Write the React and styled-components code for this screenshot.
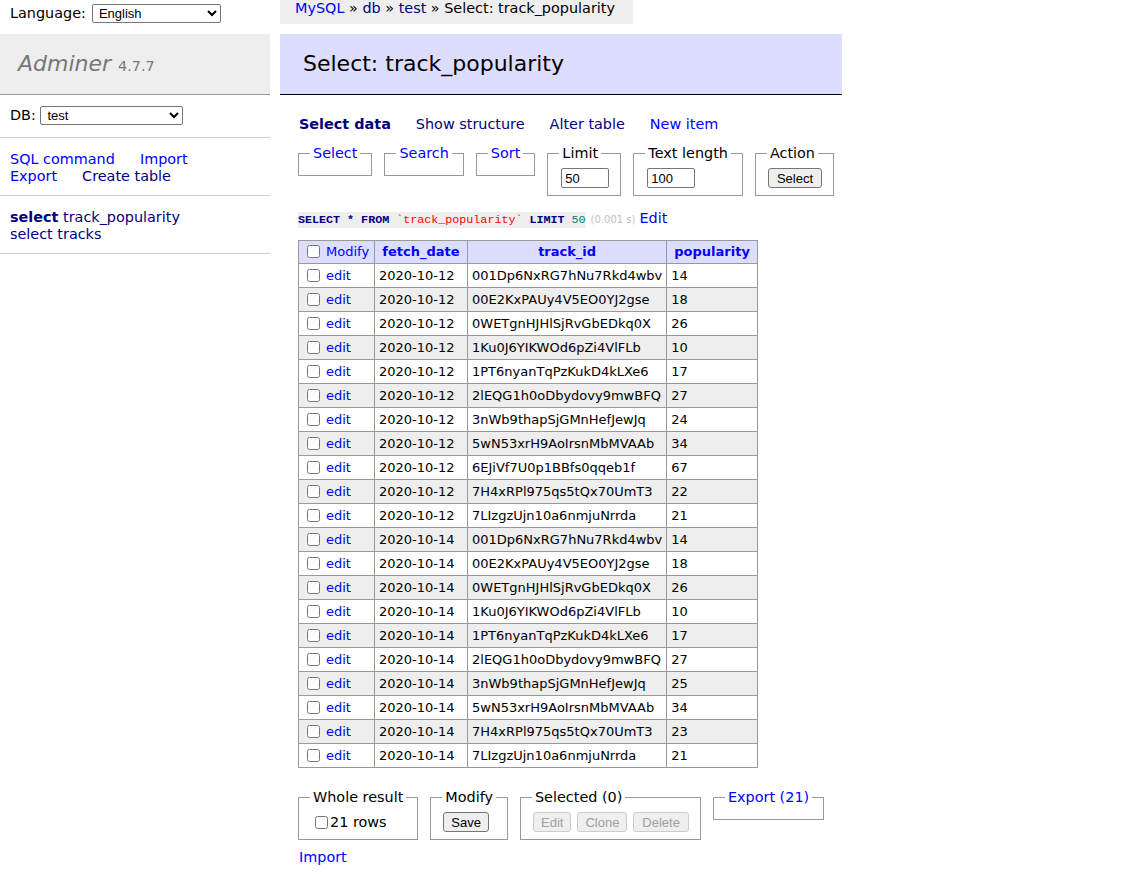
import React from 'react';
import styled, { createGlobalStyle } from 'styled-components';

const GlobalStyle = createGlobalStyle`
  body {
    margin: 0;
    background: #fff;
    color: #000;
    font: 14.4px/1.25 "DejaVu Sans", Verdana, sans-serif;
  }
  a { color: blue; text-decoration: none; }
`;

const rows = [
  ['2020-10-12', '001Dp6NxRG7hNu7Rkd4wbv', 14],
  ['2020-10-12', '00E2KxPAUy4V5EO0YJ2gse', 18],
  ['2020-10-12', '0WETgnHJHlSjRvGbEDkq0X', 26],
  ['2020-10-12', '1Ku0J6YIKWOd6pZi4VlFLb', 10],
  ['2020-10-12', '1PT6nyanTqPzKukD4kLXe6', 17],
  ['2020-10-12', '2lEQG1h0oDbydovy9mwBFQ', 27],
  ['2020-10-12', '3nWb9thapSjGMnHefJewJq', 24],
  ['2020-10-12', '5wN53xrH9AoIrsnMbMVAAb', 34],
  ['2020-10-12', '6EJiVf7U0p1BBfs0qqeb1f', 67],
  ['2020-10-12', '7H4xRPl975qs5tQx70UmT3', 22],
  ['2020-10-12', '7LIzgzUjn10a6nmjuNrrda', 21],
  ['2020-10-14', '001Dp6NxRG7hNu7Rkd4wbv', 14],
  ['2020-10-14', '00E2KxPAUy4V5EO0YJ2gse', 18],
  ['2020-10-14', '0WETgnHJHlSjRvGbEDkq0X', 26],
  ['2020-10-14', '1Ku0J6YIKWOd6pZi4VlFLb', 10],
  ['2020-10-14', '1PT6nyanTqPzKukD4kLXe6', 17],
  ['2020-10-14', '2lEQG1h0oDbydovy9mwBFQ', 27],
  ['2020-10-14', '3nWb9thapSjGMnHefJewJq', 25],
  ['2020-10-14', '5wN53xrH9AoIrsnMbMVAAb', 34],
  ['2020-10-14', '7H4xRPl975qs5tQx70UmT3', 23],
  ['2020-10-14', '7LIzgzUjn10a6nmjuNrrda', 21],
];

const Page = styled.div`
  display: flex;
  align-items: flex-start;
`;

const Menu = styled.div`
  width: 270px;
  flex-shrink: 0;
`;

const Lang = styled.div`
  height: 34px;
  padding: 3px 10px 0;
  box-sizing: border-box;
  display: flex;
  align-items: flex-start;
  gap: 6px;
  line-height: 19px;
`;

const Select = styled.select`
  width: ${(p) => p.$w}px;
  height: 19px;
  margin-top: ${(p) => p.$top || 0}px;
  font: 13px "Liberation Sans", Arial, sans-serif;
  border: 1px solid #767676;
  border-radius: 2px;
  background: #fff;
  padding: 0 2px;
`;

const Logo = styled.h1`
  margin: 0;
  height: 60px;
  padding: 0 0 0 18px;
  display: flex;
  align-items: center;
  background: #eee;
  border-bottom: 1px solid #999;
  color: #777;
  font-size: 22px;
  font-weight: normal;
  font-style: italic;
  span {
    font-style: normal;
    font-size: 14.4px;
    margin-left: 7px;
    margin-top: 4px;
  }
`;

const MenuBlock = styled.div`
  padding: ${(p) => p.$pad};
  border-bottom: 1px solid #ccc;
  line-height: 17px;
`;

const MenuLink = styled.a`
  margin-right: ${(p) => p.$mr ?? 25}px;
  white-space: nowrap;
  color: ${(p) => (p.$navy ? 'navy' : 'blue')};
  font-weight: ${(p) => (p.$bold ? 'bold' : 'normal')};
`;

const Main = styled.div`
  margin-left: 10px;
  padding-right: 20px;
`;

const Breadcrumb = styled.p`
  margin: 0;
  width: fit-content;
  height: 24px;
  line-height: 17px;
  padding: 0 18px 0 15px;
  background: #eee;
  white-space: nowrap;
`;

const Crumb = styled.a`
  color: ${(p) => (p.$navy ? 'navy' : 'blue')};
`;

const Title = styled.h2`
  margin: 10px 0 20px;
  width: 562px;
  height: 61px;
  box-sizing: border-box;
  padding: 0 0 0 23px;
  display: flex;
  align-items: center;
  background: #ddf;
  border-bottom: 1px solid #000;
  font-size: 22px;
  font-weight: normal;
`;

const Content = styled.div`
  padding-left: 18px;
`;

const Links = styled.p`
  margin: 0;
  display: flex;
  gap: 25px;
  line-height: 18px;
  padding-left: 1px;
`;

const Row = styled.div`
  display: flex;
  align-items: flex-start;
  gap: 12px;
  margin-top: ${(p) => p.$top}px;
`;

const Fieldset = styled.fieldset`
  margin: 0;
  padding: 6px 11px 7px;
  border: 1px solid #999;
  min-width: 0;
  display: flex;
  align-items: center;
  gap: ${(p) => p.$gap || 0}px;
  legend {
    padding: 0 3px;
    line-height: 18px;
    margin-left: 0;
  }
`;

const Label = styled.label`
  display: flex;
  align-items: center;
  gap: 2px;
  height: 20px;
  input { margin: 0 0 0 5px; }
`;

const TextInput = styled.input`
  width: 48px;
  height: 20px;
  box-sizing: border-box;
  font: 13px "Liberation Sans", Arial, sans-serif;
  border: 1px solid #767676;
  border-radius: 2px;
  padding: 1px 3px;
  margin: 0 0 0 2px;
`;

const Button = styled.button`
  height: 20px;
  padding: 0 ${(p) => p.$px || 7}px;
  margin: 0 0 0 ${(p) => p.$ml || 0}px;
  font: 13px "Liberation Sans", Arial, sans-serif;
  background: #efefef;
  color: ${(p) => (p.disabled ? '#a0a0a0' : '#000')};
  border: 1px solid ${(p) => (p.disabled ? '#ccc' : '#767676')};
  border-radius: 3px;
`;

const SqlLine = styled.p`
  margin: 13px 0 0;
  display: flex;
  align-items: baseline;
  line-height: 18px;
`;

const Code = styled.code`
  background: #eee;
  font: bold 11.7px "Liberation Mono", "Courier New", monospace;
  color: navy;
  padding: 1px 0;
`;

const Str = styled.span`
  color: ${(p) => p.$color};
  font-weight: normal;
`;

const Time = styled.span`
  color: silver;
  font-size: 10px;
  margin: 0 4px 0 5px;
`;

const Table = styled.table`
  margin-top: 11px;
  border-collapse: collapse;
  border-top: 1px solid #999;
  border-left: 1px solid #999;
  font-size: 13px;
  line-height: 16px;
`;

const Cell = styled.td`
  box-sizing: border-box;
  border-right: 1px solid #999;
  border-bottom: 1px solid #999;
  padding: 0 4px;
  height: ${(p) => p.$h || 24}px;
  width: ${(p) => (p.$w ? `${p.$w}px` : 'auto')};
  background: ${(p) => (p.$head ? '#ddf' : 'transparent')};
  white-space: nowrap;
  input { margin: 0 6px 0 4px; vertical-align: -2px; }
`;

const HeadCell = styled.th`
  box-sizing: border-box;
  border-right: 1px solid #999;
  border-bottom: 1px solid #999;
  padding: 0 7px;
  height: 23px;
  width: ${(p) => p.$w}px;
  background: #ddf;
  text-align: center;
  white-space: nowrap;
`;

const BodyRow = styled.tr`
  background: ${(p) => (p.$odd ? '#eee' : '#fff')};
`;

const Check = styled.input.attrs({ type: 'checkbox' })`
  width: 13px;
  height: 13px;
`;

const Footer = styled.p`
  margin: 8px 0 0;
  line-height: 18px;
  padding-left: 1px;
`;

export default function App() {
  return (
    <Page>
      <GlobalStyle />
      <Menu>
        <Lang>
          <span style={{ marginTop: 1 }}>Language:</span>
          <Select $w={129} $top={1} defaultValue="English">
            <option>English</option>
          </Select>
        </Lang>
        <Logo>
          Adminer
          <span>4.7.7</span>
        </Logo>
        <MenuBlock $pad="11px 10px 12px">
          DB:
          {' '}
          <Select $w={143} defaultValue="test">
            <option>test</option>
          </Select>
        </MenuBlock>
        <MenuBlock $pad="13px 10px 10px">
          <MenuLink href="#">SQL command</MenuLink>
          <MenuLink href="#">Import</MenuLink>
          <br />
          <MenuLink href="#">Export</MenuLink>
          <MenuLink href="#" $navy>Create table</MenuLink>
        </MenuBlock>
        <MenuBlock $pad="13px 10px 10px">
          <MenuLink href="#" $navy $mr={0}>
            <strong>select</strong>
            {' '}
            track_popularity
          </MenuLink>
          <br />
          <MenuLink href="#" $navy $mr={0}>select tracks</MenuLink>
        </MenuBlock>
      </Menu>

      <Main>
        <Breadcrumb>
          <Crumb href="#">MySQL</Crumb>
          {' » '}
          <Crumb href="#" $navy>db</Crumb>
          {' » '}
          <Crumb href="#" $navy>test</Crumb>
          {' » Select: track_popularity'}
        </Breadcrumb>
        <Title>Select: track_popularity</Title>
        <Content>
          <Links>
            <MenuLink href="#" $navy $bold $mr={0}>Select data</MenuLink>
            <MenuLink href="#" $navy $mr={0}>Show structure</MenuLink>
            <MenuLink href="#" $navy $mr={0}>Alter table</MenuLink>
            <MenuLink href="#" $mr={0}>New item</MenuLink>
          </Links>

          <Row $top={11}>
            <Fieldset><legend><a href="#">Select</a></legend></Fieldset>
            <Fieldset><legend><a href="#">Search</a></legend></Fieldset>
            <Fieldset><legend><a href="#">Sort</a></legend></Fieldset>
            <Fieldset>
              <legend>Limit</legend>
              <TextInput defaultValue="50" />
            </Fieldset>
            <Fieldset>
              <legend>Text length</legend>
              <TextInput defaultValue="100" />
            </Fieldset>
            <Fieldset>
              <legend>Action</legend>
              <Button $px={8} $ml={1}>Select</Button>
            </Fieldset>
          </Row>

          <SqlLine>
            <Code>
              {'SELECT * FROM '}
              <Str $color="red">`track_popularity`</Str>
              {' LIMIT '}
              <Str $color="#008080">50</Str>
            </Code>
            <Time>(0.001 s)</Time>
            <a href="#">Edit</a>
          </SqlLine>

          <Table>
            <thead>
              <tr>
                <Cell $head $h={23} $w={76}>
                  <Check />
                  <a href="#">Modify</a>
                </Cell>
                <HeadCell $w={93}><a href="#">fetch_date</a></HeadCell>
                <HeadCell $w={199}><a href="#">track_id</a></HeadCell>
                <HeadCell $w={89}><a href="#">popularity</a></HeadCell>
              </tr>
            </thead>
            <tbody>
              {rows.map(([date, id, pop], i) => (
                <BodyRow key={i} $odd={i % 2 === 1}>
                  <Cell>
                    <Check />
                    <a href="#">edit</a>
                  </Cell>
                  <Cell>{date}</Cell>
                  <Cell>{id}</Cell>
                  <Cell>{pop}</Cell>
                </BodyRow>
              ))}
            </tbody>
          </Table>

          <Row $top={20}>
            <Fieldset>
              <legend>Whole result</legend>
              <Label>
                <Check />
                21 rows
              </Label>
            </Fieldset>
            <Fieldset>
              <legend>Modify</legend>
              <Button $ml={1}>Save</Button>
            </Fieldset>
            <Fieldset $gap={6}>
              <legend>Selected (0)</legend>
              <Button disabled $ml={1}>Edit</Button>
              <Button disabled>Clone</Button>
              <Button disabled $px={8}>Delete</Button>
            </Fieldset>
            <Fieldset><legend><a href="#">Export (21)</a></legend></Fieldset>
          </Row>

          <Footer><a href="#">Import</a></Footer>
        </Content>
      </Main>
    </Page>
  );
}
